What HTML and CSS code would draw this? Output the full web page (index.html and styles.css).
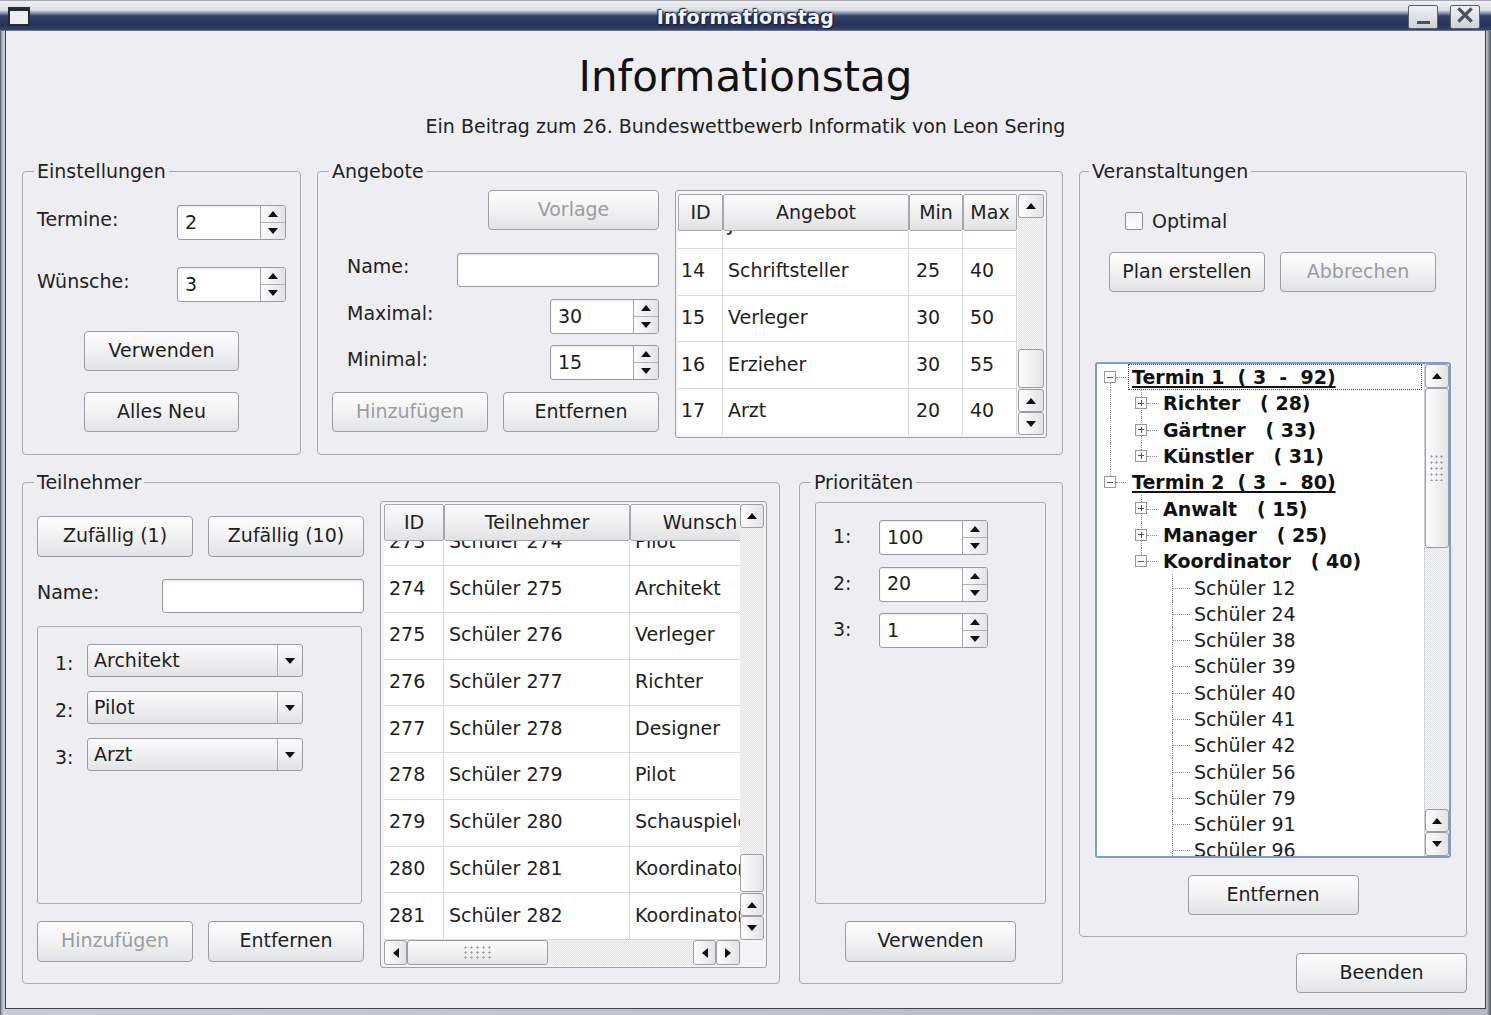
FILE: index.html
```html
<!DOCTYPE html>
<html lang="de">
<head>
<meta charset="utf-8">
<title>Informationstag</title>
<link rel="stylesheet" href="styles.css">
</head>
<body>
<div class="window">
  <div class="titlebar">
    <span class="win-icon"></span>
    <span class="win-title">Informationstag</span>
    <span class="win-btns">
      <span class="wbtn"><svg width="28" height="23" viewBox="0 0 28 23"><rect x="8" y="15" width="13" height="3" fill="#4d5059"/></svg></span>
      <span class="wbtn"><svg width="28" height="23" viewBox="0 0 28 23"><path d="M8.5 3.5 L19.5 14.5 M19.5 3.5 L8.5 14.5" stroke="#4d5059" stroke-width="3.2" stroke-linecap="square"/></svg></span>
    </span>
  </div>

  <div class="client">
    <h1 class="app-title">Informationstag</h1>
    <p class="app-sub">Ein Beitrag zum 26. Bundeswettbewerb Informatik von Leon Sering</p>

    <div class="panels">
      <div class="leftcol">
        <div class="row-top">
          <!-- Einstellungen -->
          <fieldset class="grp g-einst">
            <legend>Einstellungen</legend>
            <div class="einst-body">
              <div class="frow mt23">
                <span class="lbl">Termine:</span>
                <div class="spin"><span class="spin-val">2</span><span class="spin-arr"><span class="sa up"></span><span class="sa dn"></span></span></div>
              </div>
              <div class="frow mt27">
                <span class="lbl">Wünsche:</span>
                <div class="spin"><span class="spin-val">3</span><span class="spin-arr"><span class="sa up"></span><span class="sa dn"></span></span></div>
              </div>
              <button class="btn b155 h40 centered mt29">Verwenden</button>
              <button class="btn b155 h40 centered mt21">Alles Neu</button>
            </div>
          </fieldset>

          <!-- Angebote -->
          <fieldset class="grp g-ang">
            <legend>Angebote</legend>
            <div class="ang-body">
              <div class="ang-form">
                <button class="btn dis b171 h40 right">Vorlage</button>
                <div class="frow mt23 h34">
                  <span class="lbl ind15">Name:</span>
                  <div class="input w202"></div>
                </div>
                <div class="frow mt12">
                  <span class="lbl ind15">Maximal:</span>
                  <div class="spin"><span class="spin-val">30</span><span class="spin-arr"><span class="sa up"></span><span class="sa dn"></span></span></div>
                </div>
                <div class="frow mt11">
                  <span class="lbl ind15">Minimal:</span>
                  <div class="spin"><span class="spin-val">15</span><span class="spin-arr"><span class="sa up"></span><span class="sa dn"></span></span></div>
                </div>
                <div class="btnrow mt12">
                  <button class="btn dis b156 h40">Hinzufügen</button>
                  <button class="btn b156 h40">Entfernen</button>
                </div>
              </div>

              <div class="tframe t-ang">
                <div class="tview v-ang">
                  <div class="thr">
                    <span class="th w45">ID</span><span class="th w186">Angebot</span><span class="th w54">Min</span><span class="th w54">Max</span>
                  </div>
                  <div class="tbody b-ang">
                    <div class="trw first-ang"><span class="td w45 pid">13</span><span class="td w186">Journalist</span><span class="td w54 pnum">10</span><span class="td w54 pnum">25</span></div>
                    <div class="trw"><span class="td w45 pid">14</span><span class="td w186">Schriftsteller</span><span class="td w54 pnum">25</span><span class="td w54 pnum">40</span></div>
                    <div class="trw"><span class="td w45 pid">15</span><span class="td w186">Verleger</span><span class="td w54 pnum">30</span><span class="td w54 pnum">50</span></div>
                    <div class="trw"><span class="td w45 pid">16</span><span class="td w186">Erzieher</span><span class="td w54 pnum">30</span><span class="td w54 pnum">55</span></div>
                    <div class="trw"><span class="td w45 pid">17</span><span class="td w186">Arzt</span><span class="td w54 pnum">20</span><span class="td w54 pnum">40</span></div>
                  </div>
                </div>
                <div class="vsb sb-ang">
                  <span class="sbtn up h24"></span>
                  <div class="trough"><span class="slider sl-ang"></span></div>
                  <span class="sbtn up h23"></span>
                  <span class="sbtn dn h23"></span>
                </div>
              </div>
            </div>
          </fieldset>
        </div>

        <div class="row-bottom">
          <!-- Teilnehmer -->
          <fieldset class="grp g-teil">
            <legend>Teilnehmer</legend>
            <div class="teil-body">
              <div class="teil-form">
                <div class="btnrow mt15">
                  <button class="btn b156 h41">Zufällig (1)</button>
                  <button class="btn b156 h41">Zufällig (10)</button>
                </div>
                <div class="frow mt22 h34">
                  <span class="lbl">Name:</span>
                  <div class="input w202"></div>
                </div>
                <div class="wishframe">
                  <div class="wrow"><span class="wlbl">1:</span><div class="combo"><span class="combo-val">Architekt</span><span class="combo-arr"></span></div></div>
                  <div class="wrow"><span class="wlbl">2:</span><div class="combo"><span class="combo-val">Pilot</span><span class="combo-arr"></span></div></div>
                  <div class="wrow"><span class="wlbl">3:</span><div class="combo"><span class="combo-val">Arzt</span><span class="combo-arr"></span></div></div>
                </div>
                <div class="btnrow mt17">
                  <button class="btn dis b156 h41">Hinzufügen</button>
                  <button class="btn b156 h41">Entfernen</button>
                </div>
              </div>

              <div class="tframe t-teil">
                <div class="tview v-teil">
                  <div class="thr">
                    <span class="th w60">ID</span><span class="th w186">Teilnehmer</span><span class="th w140">Wunsch</span>
                  </div>
                  <div class="tbody b-teil">
                    <div class="trw first-teil"><span class="td w60">273</span><span class="td w186">Schüler 274</span><span class="td w140">Pilot</span></div>
                    <div class="trw"><span class="td w60">274</span><span class="td w186">Schüler 275</span><span class="td w140">Architekt</span></div>
                    <div class="trw"><span class="td w60">275</span><span class="td w186">Schüler 276</span><span class="td w140">Verleger</span></div>
                    <div class="trw"><span class="td w60">276</span><span class="td w186">Schüler 277</span><span class="td w140">Richter</span></div>
                    <div class="trw"><span class="td w60">277</span><span class="td w186">Schüler 278</span><span class="td w140">Designer</span></div>
                    <div class="trw"><span class="td w60">278</span><span class="td w186">Schüler 279</span><span class="td w140">Pilot</span></div>
                    <div class="trw"><span class="td w60">279</span><span class="td w186">Schüler 280</span><span class="td w140">Schauspieler</span></div>
                    <div class="trw"><span class="td w60">280</span><span class="td w186">Schüler 281</span><span class="td w140">Koordinator</span></div>
                    <div class="trw"><span class="td w60">281</span><span class="td w186">Schüler 282</span><span class="td w140">Koordinator</span></div>
                  </div>
                </div>
                <div class="vsb sb-teil">
                  <span class="sbtn up h24"></span>
                  <div class="trough"><span class="slider sl-teil"></span></div>
                  <span class="sbtn up h23"></span>
                  <span class="sbtn dn h24"></span>
                </div>
                <div class="hsb">
                  <span class="sbtn lf w23"></span>
                  <span class="slider hsl"><span class="grip-h"></span></span>
                  <span class="htrough"></span>
                  <span class="sbtn lf w23"></span>
                  <span class="sbtn rt w24"></span>
                </div>
                <div class="corner"></div>
              </div>
            </div>
          </fieldset>

          <!-- Prioritäten -->
          <fieldset class="grp g-prio">
            <legend>Prioritäten</legend>
            <div class="prio-body">
              <div class="prioframe">
                <div class="prow"><span class="plbl">1:</span><div class="spin"><span class="spin-val">100</span><span class="spin-arr"><span class="sa up"></span><span class="sa dn"></span></span></div></div>
                <div class="prow"><span class="plbl">2:</span><div class="spin"><span class="spin-val">20</span><span class="spin-arr"><span class="sa up"></span><span class="sa dn"></span></span></div></div>
                <div class="prow"><span class="plbl">3:</span><div class="spin"><span class="spin-val">1</span><span class="spin-arr"><span class="sa up"></span><span class="sa dn"></span></span></div></div>
              </div>
              <button class="btn b171 h41 centered mt17">Verwenden</button>
            </div>
          </fieldset>
        </div>
      </div>

      <div class="rightcol">
        <!-- Veranstaltungen -->
        <fieldset class="grp g-veran">
          <legend>Veranstaltungen</legend>
          <div class="veran-body">
            <div class="optrow"><span class="checkbox"></span><span class="optlbl">Optimal</span></div>
            <div class="planrow">
              <button class="btn b156 h40">Plan erstellen</button>
              <button class="btn dis b156 h40">Abbrechen</button>
            </div>
            <div class="tree">
              <div class="tree-rows">
                <div class="trow"><span class="tc d"><span class="exp"></span></span><span class="tl top focus">Termin 1&nbsp;&nbsp;(&nbsp;3&nbsp;&nbsp;-&nbsp;&nbsp;92)</span></div>
                <div class="trow"><span class="tc v"></span><span class="tc ud"><span class="exp plus"></span></span><span class="tl mid">Richter&nbsp;&nbsp;&nbsp;(&nbsp;28)</span></div>
                <div class="trow"><span class="tc v"></span><span class="tc ud"><span class="exp plus"></span></span><span class="tl mid">Gärtner&nbsp;&nbsp;&nbsp;(&nbsp;33)</span></div>
                <div class="trow"><span class="tc v"></span><span class="tc u"><span class="exp plus"></span></span><span class="tl mid">Künstler&nbsp;&nbsp;&nbsp;(&nbsp;31)</span></div>
                <div class="trow"><span class="tc u"><span class="exp"></span></span><span class="tl top">Termin 2&nbsp;&nbsp;(&nbsp;3&nbsp;&nbsp;-&nbsp;&nbsp;80)</span></div>
                <div class="trow"><span class="tc"></span><span class="tc ud"><span class="exp plus"></span></span><span class="tl mid">Anwalt&nbsp;&nbsp;&nbsp;(&nbsp;15)</span></div>
                <div class="trow"><span class="tc"></span><span class="tc ud"><span class="exp plus"></span></span><span class="tl mid">Manager&nbsp;&nbsp;&nbsp;(&nbsp;25)</span></div>
                <div class="trow"><span class="tc"></span><span class="tc u"><span class="exp"></span></span><span class="tl mid">Koordinator&nbsp;&nbsp;&nbsp;(&nbsp;40)</span></div>
                <div class="trow"><span class="tc"></span><span class="tc"></span><span class="tc ud leaf"></span><span class="tl">Schüler 12</span></div>
                <div class="trow"><span class="tc"></span><span class="tc"></span><span class="tc ud leaf"></span><span class="tl">Schüler 24</span></div>
                <div class="trow"><span class="tc"></span><span class="tc"></span><span class="tc ud leaf"></span><span class="tl">Schüler 38</span></div>
                <div class="trow"><span class="tc"></span><span class="tc"></span><span class="tc ud leaf"></span><span class="tl">Schüler 39</span></div>
                <div class="trow"><span class="tc"></span><span class="tc"></span><span class="tc ud leaf"></span><span class="tl">Schüler 40</span></div>
                <div class="trow"><span class="tc"></span><span class="tc"></span><span class="tc ud leaf"></span><span class="tl">Schüler 41</span></div>
                <div class="trow"><span class="tc"></span><span class="tc"></span><span class="tc ud leaf"></span><span class="tl">Schüler 42</span></div>
                <div class="trow"><span class="tc"></span><span class="tc"></span><span class="tc ud leaf"></span><span class="tl">Schüler 56</span></div>
                <div class="trow"><span class="tc"></span><span class="tc"></span><span class="tc ud leaf"></span><span class="tl">Schüler 79</span></div>
                <div class="trow"><span class="tc"></span><span class="tc"></span><span class="tc ud leaf"></span><span class="tl">Schüler 91</span></div>
                <div class="trow"><span class="tc"></span><span class="tc"></span><span class="tc ud leaf"></span><span class="tl">Schüler 96</span></div>
              </div>
              <div class="vsb sb-tree">
                <span class="sbtn up h24"></span>
                <span class="slider sl-tree"><span class="grip-v"></span></span>
                <div class="trough"></div>
                <span class="sbtn up h23"></span>
                <span class="sbtn dn h24"></span>
              </div>
            </div>
            <button class="btn b171 h40 centered mt17">Entfernen</button>
          </div>
        </fieldset>
        <button class="btn b171 h40 beenden">Beenden</button>
      </div>
    </div>
  </div>
</div>
</body>
</html>
```

FILE: styles.css
```css
* { box-sizing: border-box; }
html, body { margin: 0; padding: 0; }
body {
  width: 1491px; height: 1015px; overflow: hidden;
  font-family: "DejaVu Sans", "Liberation Sans", sans-serif;
  font-size: 19px; color: #222;
  background: #8f939c;
}
.window {
  width: 1491px; height: 1015px;
  display: flex; flex-direction: column;
  background: linear-gradient(90deg, #4b4f58 0, #b6b9c0 2px, #c9ccd2 4px, #b6b9c0 1487px, #4b4f58 1491px);
}

/* ---------- title bar ---------- */
.titlebar {
  height: 31px; flex: none;
  display: grid; grid-template-columns: 1fr auto 1fr; align-items: center;
  background: linear-gradient(180deg, #5d616b 0, #eef0f3 1px, #dcdfe5 10px, #8892ab 13px, #34426a 16px, #243258 25px, #35436b 30px, #9ea3ae 31px);
}
.win-icon {
  justify-self: start; margin-left: 8px; margin-top: 2px;
  width: 22px; height: 19px;
  border: 2px solid #262930; border-top-width: 4px;
  background: #eceef2;
}
.win-title {
  font-weight: bold; font-size: 19px; color: #f3f5fa; letter-spacing: 0.3px;
  text-shadow: 0 0 2px #1a2241, 1px 1px 1px #1a2241, -1px -1px 1px #1a2241;
  margin-top: 2px;
}
.win-btns { justify-self: end; display: flex; gap: 12px; margin-right: 11px; margin-top: 2px; }
.wbtn {
  width: 30px; height: 24px; display: flex;
  border: 1px solid #5a5e68; border-radius: 2px;
  background: linear-gradient(180deg, #f0f1f4, #cfd2d8);
}

/* ---------- client ---------- */
.client {
  flex: 1; margin: 0 5px 6px 5px;
  background: #eeeef2;
  border: 1px solid #3f434c; border-top: 0;
  display: flex; flex-direction: column;
}
.app-title {
  margin: 21px 0 0; font-size: 42px; font-weight: normal; line-height: 49px;
  text-align: center; color: #111;
}
.app-sub {
  margin: 14px 0 0; line-height: 22px; text-align: center; color: #222;
}
.panels {
  margin-top: 23px; padding-left: 16px;
  display: grid; grid-template-columns: 1041px 388px; column-gap: 16px;
}
.leftcol { display: flex; flex-direction: column; gap: 16px; }
.row-top { display: flex; gap: 16px; height: 295px; }
.row-bottom { display: flex; gap: 19px; height: 513px; }
.rightcol { display: flex; flex-direction: column; }

/* ---------- group boxes ---------- */
.grp {
  margin: 0; padding: 0; min-width: 0;
  border: 1px solid #a9aab0; border-radius: 4px;
}
.grp > legend {
  margin-left: 11px; padding: 0 3px; line-height: 22px; font-size: 19px; color: #222;
}
.g-einst { width: 279px; height: 295px; }
.g-ang { width: 746px; height: 295px; }
.g-teil { width: 758px; height: 513px; }
.g-prio { width: 264px; height: 513px; }
.g-veran { width: 388px; height: 777px; }
.g-veran > legend { margin-left: 9px; }

/* ---------- common widgets ---------- */
.frow { display: flex; align-items: center; justify-content: space-between; height: 35px; }
.h34 { height: 34px; }
.lbl { color: #222; padding-bottom: 8px; }
.ind15 { padding-left: 15px; }
.mt11 { margin-top: 11px; } .mt12 { margin-top: 12px; } .mt15 { margin-top: 15px; }
.mt17 { margin-top: 17px; } .mt21 { margin-top: 21px; } .mt22 { margin-top: 22px; }
.mt23 { margin-top: 23px; } .mt27 { margin-top: 27px; } .mt29 { margin-top: 29px; }

.btn {
  font: inherit; font-size: 19px; color: #1e1e1e;
  border: 1px solid #9d9ea4; border-radius: 4px;
  background: linear-gradient(180deg, #fdfdfd 0%, #f2f2f4 50%, #e2e3e6 100%);
  padding: 0 0 3px; display: flex; align-items: center; justify-content: center;
  box-shadow: inset 0 1px 0 #fff;
}
.btn.dis { color: #9b9ca0; }
.b155 { width: 155px; } .b156 { width: 156px; } .b171 { width: 171px; }
.h40 { height: 40px; } .h41 { height: 41px; }
.centered { margin-left: auto; margin-right: auto; }
.right { align-self: flex-end; }
.btnrow { display: flex; justify-content: space-between; }

.input {
  height: 34px; background: #fff;
  border: 1px solid #9a9ba0; border-radius: 3px;
  box-shadow: inset 0 1px 2px rgba(0,0,0,0.12);
}
.w202 { width: 202px; }

.spin {
  width: 109px; height: 35px; display: flex;
  border: 1px solid #9a9ba0; border-radius: 3px; background: #fff;
  box-shadow: inset 0 1px 2px rgba(0,0,0,0.10);
  overflow: hidden;
}
.spin-val { flex: 1; padding: 0 0 2px 7px; display: flex; align-items: center; color: #1e1e1e; }
.spin-arr {
  width: 25px; flex: none; display: flex; flex-direction: column;
  border-left: 1px solid #a5a6ab;
  background: linear-gradient(90deg, #fbfbfc, #e4e4e7);
}
.sa { flex: 1; display: flex; align-items: center; justify-content: center; }
.sa.up { border-bottom: 1px solid #b1b2b7; }
.sa.up::before { content: ""; border-left: 5px solid transparent; border-right: 5px solid transparent; border-bottom: 6px solid #111; }
.sa.dn::before { content: ""; border-left: 5px solid transparent; border-right: 5px solid transparent; border-top: 6px solid #111; }

.combo {
  width: 216px; height: 33px; display: flex;
  border: 1px solid #9d9ea4; border-radius: 3px;
  background: linear-gradient(180deg, #fbfbfc 0%, #eeeef0 55%, #e2e3e6 100%);
}
.combo-val { flex: 1; padding: 0 0 2px 6px; display: flex; align-items: center; color: #1e1e1e; }
.combo-arr {
  width: 25px; flex: none; border-left: 1px solid #acadb2;
  display: flex; align-items: center; justify-content: center;
}
.combo-arr::before { content: ""; border-left: 5px solid transparent; border-right: 5px solid transparent; border-top: 6px solid #111; }

.checkbox {
  width: 18px; height: 18px; flex: none;
  border: 1px solid #8e8f95; border-radius: 2px;
  background: linear-gradient(180deg, #f3f3f5, #fff);
}

/* ---------- Einstellungen ---------- */
.einst-body { padding: 0 14px; display: flex; flex-direction: column; }

/* ---------- Angebote ---------- */
.ang-body { padding: 8px 15px 0 14px; display: flex; gap: 16px; }
.ang-form { width: 327px; flex: none; display: flex; flex-direction: column; }

/* ---------- tables ---------- */
.tframe {
  border: 1px solid #9fa0a6; border-radius: 3px; padding: 2px;
  background: #f5f5f7;
}
.t-ang { width: 372px; height: 248px; display: flex; padding-top: 3px; }
.v-ang { width: 339px; }
.tview { display: flex; flex-direction: column; overflow: hidden; background: #fff; }
.thr { display: flex; height: 37px; flex: none; position: relative; z-index: 1; }
.th {
  flex: none; display: flex; align-items: center; justify-content: center;
  border: 1px solid #a7a8ad; border-radius: 2px;
  background: linear-gradient(180deg, #fcfcfd 0%, #efeff1 55%, #e2e2e5 100%);
  color: #222; white-space: nowrap; padding-bottom: 2px;
}
.tbody { flex: 1; overflow: hidden; }
.trw { display: flex; height: 46.7px; border-bottom: 1px solid #d9d9dc; }
.td {
  flex: none; display: flex; align-items: center; padding: 0 0 3px 5px;
  border-right: 1px solid #d9d9dc; white-space: nowrap; overflow: hidden; color: #1e1e1e;
}
.td.pid { padding-left: 3px; }
.td.pnum { padding-left: 7px; }
.w45 { width: 45px; } .w54 { width: 54px; } .w60 { width: 60px; }
.w140 { width: 140px; } .w186 { width: 186px; }
.first-ang { margin-top: -28.8px; }
.first-teil { margin-top: -21.3px; }

/* ---------- scrollbars ---------- */
.vsb {
  display: flex; flex-direction: column;
  background: repeating-conic-gradient(#e1e2e5 0 25%, #f7f7f8 0 50%) 0 0 / 2px 2px;
}
.sb-ang { width: 26px; margin-left: 1px; }
.sbtn {
  flex: none; display: flex; align-items: center; justify-content: center;
  border: 1px solid #9c9da2; border-radius: 3px;
  background: linear-gradient(90deg, #fdfdfd, #e3e3e6);
}
.h23 { height: 23px; } .h24 { height: 24px; }
.w23 { width: 23px; } .w24 { width: 24px; }
.sbtn.up::before { content: ""; border-left: 5px solid transparent; border-right: 5px solid transparent; border-bottom: 6px solid #111; }
.sbtn.dn::before { content: ""; border-left: 5px solid transparent; border-right: 5px solid transparent; border-top: 6px solid #111; }
.sbtn.lf::before { content: ""; border-top: 5px solid transparent; border-bottom: 5px solid transparent; border-right: 6px solid #111; }
.sbtn.rt::before { content: ""; border-top: 5px solid transparent; border-bottom: 5px solid transparent; border-left: 6px solid #111; }
.trough { flex: 1; display: flex; flex-direction: column; }
.slider {
  flex: none; display: flex; align-items: center; justify-content: center;
  border: 1px solid #9c9da2; border-radius: 3px;
  background: linear-gradient(90deg, #fdfdfd, #e5e5e8);
}
.sl-ang { height: 39px; margin-top: auto; margin-bottom: 1px; }
.sl-teil { height: 38px; margin-top: auto; margin-bottom: 1px; }
.sl-tree { height: 160px; }
.grip-v {
  width: 15px; height: 26px;
  background: radial-gradient(circle at 1.5px 1.5px, #9b9ca2 0.9px, transparent 1.3px) 0 0 / 5px 6px;
}
.grip-h {
  width: 28px; height: 14px;
  background: radial-gradient(circle at 1.5px 1.5px, #9b9ca2 0.9px, transparent 1.3px) 0 0 / 6px 5px;
}

/* ---------- Teilnehmer ---------- */
.teil-body { padding: 8px 12px 0 14px; display: flex; gap: 16px; }
.teil-form { width: 327px; flex: none; display: flex; flex-direction: column; }
.wishframe {
  margin-top: 13px; width: 325px; height: 278px;
  border: 1px solid #a9aab0; border-radius: 3px;
  padding: 17px 0 0 17px;
  display: flex; flex-direction: column; gap: 14px;
}
.wrow { display: flex; align-items: center; }
.wlbl { width: 32px; padding-top: 5px; }
.t-teil {
  width: 387px; height: 467px; padding-left: 3px;
  display: grid; grid-template-columns: 356px 24px; grid-template-rows: 436px 25px;
}
.v-teil { width: 356px; }
.sb-teil { width: 24px; }
.hsb {
  display: flex; height: 25px;
  background: repeating-conic-gradient(#e1e2e5 0 25%, #f7f7f8 0 50%) 0 0 / 2px 2px;
}
.hsl { width: 141px; background: linear-gradient(180deg, #fdfdfd, #e5e5e8); }
.htrough { flex: 1; }
.corner { background: #f3f3f5; }

/* ---------- Prioritäten ---------- */
.prio-body { padding: 9px 16px 0 15px; display: flex; flex-direction: column; }
.prioframe {
  width: 231px; height: 402px;
  border: 1px solid #a9aab0; border-radius: 3px;
  padding: 17px 0 0 17px;
  display: flex; flex-direction: column; gap: 11.5px;
}
.prow { display: flex; align-items: center; }
.plbl { width: 46px; padding-bottom: 3px; }

/* ---------- Veranstaltungen ---------- */
.veran-body { padding: 0 15px; display: flex; flex-direction: column; }
.optrow { margin-top: 30px; padding-left: 30px; display: flex; align-items: center; height: 18px; }
.optlbl { margin-left: 9px; }
.planrow { margin-top: 22px; padding-left: 14px; display: flex; gap: 15px; }
.tree {
  margin-top: 70px; width: 356px; height: 496px;
  border: 2px solid #7e9dd6; border-radius: 3px;
  display: flex; background: #fff;
}
.tree-rows { flex: 1; overflow: hidden; }
.sb-tree { width: 25px; border-left: 1px dotted #c4c4c8; }
.trow { display: flex; height: 26.3px; white-space: nowrap; }
.tc { width: 31px; flex: none; position: relative; }
.tc.v::before, .tc.ud::before, .tc.u::before, .tc.d::before {
  content: ""; position: absolute; left: 13px; border-left: 1px dotted #8d8e94;
}
.tc.v::before, .tc.ud::before { top: 0; bottom: 0; }
.tc.u::before { top: 0; height: 50%; }
.tc.d::before { top: 50%; bottom: 0; }
.tc.u::after, .tc.d::after, .tc.ud::after {
  content: ""; position: absolute; left: 19px; right: 2px; top: 50%; border-top: 1px dotted #8d8e94;
}
.tc.leaf::after { left: 14px; right: 0; }
.exp {
  position: absolute; left: 7px; top: 7px; width: 12px; height: 12px;
  border: 1px solid #97989e; background: #fff; z-index: 1;
}
.exp::before { content: ""; position: absolute; left: 2px; right: 2px; top: 4.5px; height: 1px; background: #555; }
.exp.plus::after { content: ""; position: absolute; top: 2px; bottom: 2px; left: 4.5px; width: 1px; background: #555; }
.tl { padding-left: 4px; display: flex; align-items: center; color: #1e1e1e; }
.tl.mid { font-weight: bold; color: #111; }
.tl.top { font-weight: bold; color: #111; text-decoration: underline; text-decoration-thickness: 2px; text-underline-offset: 2px; }
.tl.focus { flex: 1; margin-right: 2px; border: 1px dotted #444; padding-left: 3px; }

.beenden { margin-top: 16px; align-self: flex-end; }
```
